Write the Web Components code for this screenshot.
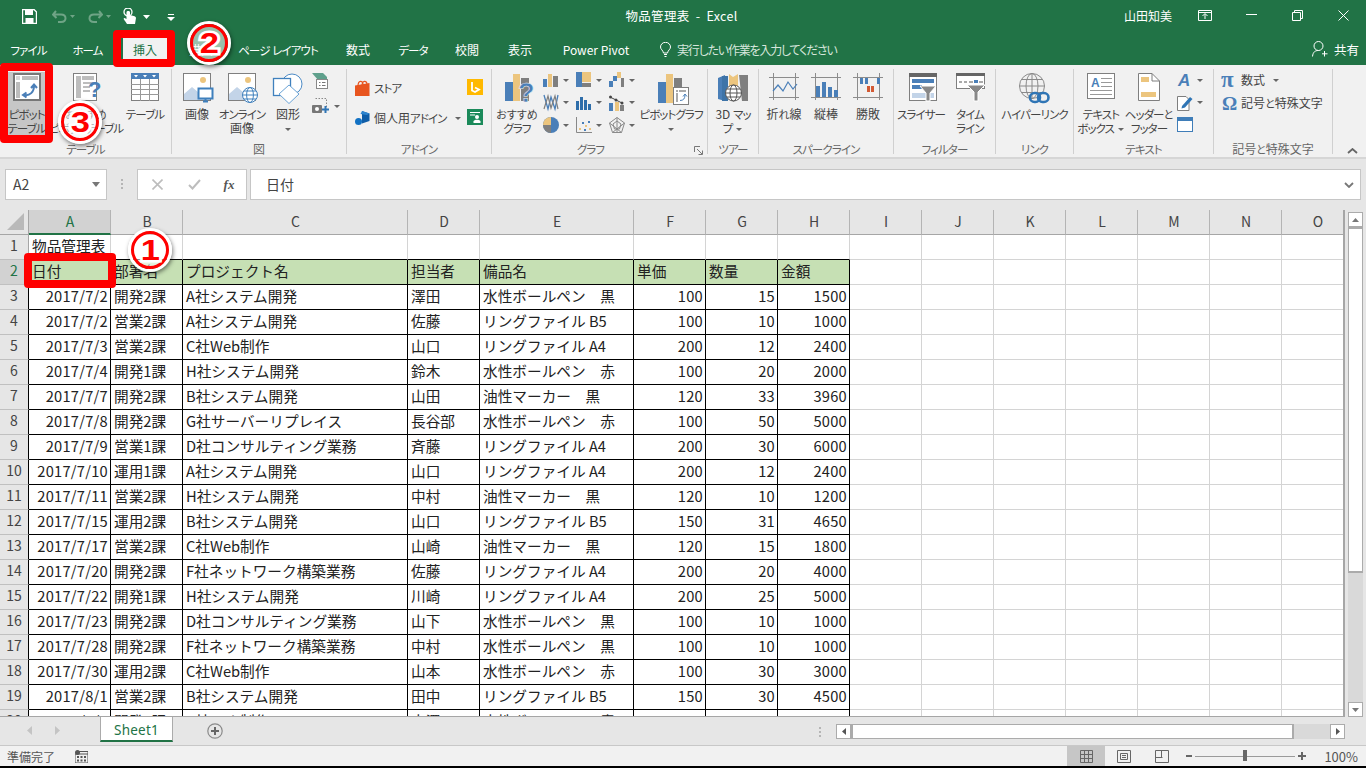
<!DOCTYPE html>
<html lang="ja">
<head>
<meta charset="utf-8">
<title>物品管理表 - Excel</title>
<style>
html, body { margin: 0; padding: 0; background: #000; overflow: hidden; }
body { font-family: "Noto Sans CJK JP", "Noto Sans", sans-serif; }
.k { font-size: 11.5px; letter-spacing: -.9px; }
.h { font-size: 11px; }
</style>
</head>
<body>
<xl-window>
  <xl-titlebar></xl-titlebar>
  <xl-tabs></xl-tabs>
  <xl-ribbon>
    <xl-group label="テーブル" w="172">
      <span style="width:7px"></span>
      <xl-big icon="pivot" w="39" active>ピボット<br>テーブル</xl-big>
      <xl-big icon="recpivot" w="80">おすすめ<br>ピボットテーブル</xl-big>
      <xl-big icon="table" w="38">テーブル</xl-big>
    </xl-group>
    <xl-group label="図" w="175">
      <xl-big icon="picture" w="50">画像</xl-big>
      <xl-big icon="online" w="40">オンライン<br>画像</xl-big>
      <xl-big icon="shapes" w="52">図形<br><xl-caret></xl-caret></xl-big>
      <xl-stack style="margin-left:-2px">
        <xl-small icon="model"></xl-small>
        <xl-small icon="shot" caret></xl-small>
      </xl-stack>
    </xl-group>
    <xl-group label="アドイン" w="145">
      <xl-stack gap="14" style="margin:7px 0 0 8px;width:112px">
        <xl-small icon="store" text="ストア"></xl-small>
        <xl-small icon="addin" text="個人用アドイン" caret></xl-small>
      </xl-stack>
      <xl-stack gap="14" style="margin-top:6px">
        <xl-small icon="bing"></xl-small>
        <xl-small icon="people"></xl-small>
      </xl-stack>
    </xl-group>
    <xl-group label="グラフ" w="216" launcher pad="18">
      <xl-big icon="recchart" w="50">おすすめ<br>グラフ</xl-big>
      <xl-stack cols="3" gap="6" style="margin-top:-1px;margin-left:1px">
        <xl-small icon="c1" caret></xl-small><xl-small icon="c2" caret></xl-small><xl-small icon="c3" caret></xl-small>
        <xl-small icon="c4" caret></xl-small><xl-small icon="c5" caret></xl-small><xl-small icon="c6" caret></xl-small>
        <xl-small icon="c7" caret></xl-small><xl-small icon="c8" caret></xl-small><xl-small icon="c9" caret></xl-small>
      </xl-stack>
      <xl-big icon="pivotchart" w="58">ピボットグラフ<br><xl-caret></xl-caret></xl-big>
    </xl-group>
    <xl-group label="ツアー" w="51">
      <xl-big icon="map3d" w="50">3D マッ<br>プ <xl-caret></xl-caret></xl-big>
    </xl-group>
    <xl-group label="スパークライン" w="135">
      <span style="width:4px"></span>
      <xl-big icon="spline" w="42">折れ線</xl-big>
      <xl-big icon="sbar" w="42">縦棒</xl-big>
      <xl-big icon="swin" w="42">勝敗</xl-big>
    </xl-group>
    <xl-group label="フィルター" w="102">
      <xl-big icon="slicer" w="54">スライサー</xl-big>
      <xl-big icon="timeline" w="44">タイム<br>ライン</xl-big>
    </xl-group>
    <xl-group label="リンク" w="78">
      <xl-big icon="link" w="77">ハイパーリンク</xl-big>
    </xl-group>
    <xl-group label="テキスト" w="140">
      <xl-big icon="textbox" w="54">テキスト<br>ボックス <xl-caret></xl-caret></xl-big>
      <xl-big icon="header" w="42">ヘッダーと<br>フッター</xl-big>
      <xl-stack gap="6" style="margin:-1px 0 0 7px">
        <xl-small icon="wordart" caret></xl-small>
        <xl-small icon="sign" caret></xl-small>
        <xl-small icon="object"></xl-small>
      </xl-stack>
    </xl-group>
    <xl-group label="記号と特殊文字" w="119">
      <xl-stack gap="7" style="margin:-1px 0 0 8px">
        <xl-small icon="pi" text="数式" caret></xl-small>
        <xl-small icon="omega" text="記号と特殊文字"></xl-small>
      </xl-stack>
    </xl-group>
  </xl-ribbon>
  <xl-formula-bar></xl-formula-bar>
  <xl-sheet></xl-sheet>
  <xl-sheet-tabs></xl-sheet-tabs>
  <xl-status></xl-status>
  <xl-callout x="113" y="30" w="62" h="37"></xl-callout>
  <xl-callout x="0" y="63" w="53" h="80"></xl-callout>
  <xl-callout x="24" y="253" w="92" h="35"></xl-callout>
  <xl-badge x="150" y="250" n="1"></xl-badge>
  <xl-badge x="209" y="43" n="2"></xl-badge>
  <xl-badge x="80" y="122" n="3"></xl-badge>
</xl-window>

<script>
const FONT = '"Noto Sans CJK JP", "Noto Sans", sans-serif';
const BLUE = '#4a7fb8';
const ORANGE = '#ecc57e';
const GRAY = '#7f7f7f';
const KANA_CSS = '.k{font-size:11.5px;letter-spacing:-.9px}.h{font-size:11px}';

// the ribbon font has narrow kana, so kana runs get their own span
function narrowKana(s) {
  return s.replace(/[ァ-ヶー・]+/g, m => `<span class="k">${m}</span>`)
    .replace(/[ぁ-ん]+/g, m => `<span class="h">${m}</span>`);
}

// icon table: [width, height, svg body]
const photo = `<rect x=".5" y=".5" width="27" height="27" fill="#fff" stroke="${GRAY}"/><circle cx="20" cy="7" r="3" fill="${ORANGE}"/><path d="M1 27V21L9 14 15 19 19 16 27 22V27Z" fill="#c3d4e8"/>`;
const sparkFrame = `<path d="M0 4.5H30M0 24.5H30M4.5 0V27M26.5 0V27" stroke="#8c8c8c" fill="none"/>`;
const ICONS = {
  pivot: [28, 28, `<rect x="1" y="1" width="26" height="26" fill="#fff" stroke="#777" stroke-width="2"/><rect x="9" y="3" width="16" height="4" fill="#bdbdbd"/><rect x="3" y="9" width="4" height="16" fill="#bdbdbd"/><rect x="3" y="3" width="4" height="4" fill="#d8d8d8"/><path d="M11 22C17 23 21 19 21 13M18 15L21 11.5 24 15M13.5 19.5L10 22 13.5 24.5" fill="none" stroke="${BLUE}" stroke-width="2"/>`],
  recpivot: [26, 32, `<rect x=".5" y=".5" width="23" height="27" fill="#fff" stroke="${GRAY}"/><rect x="3" y="3" width="5" height="22" fill="#bdbdbd"/><rect x="9" y="3" width="12" height="4" fill="#bdbdbd"/><path d="M10 10H21M10 14H17M10 18H17" stroke="#bdbdbd" stroke-width="2"/><text x="15" y="24" font-family="Liberation Sans" font-size="22" font-weight="700" fill="${BLUE}">?</text>`],
  table: [28, 28, `<rect x=".5" y=".5" width="27" height="27" fill="#fff" stroke="${GRAY}"/><rect width="28" height="6" fill="${BLUE}"/><path d="M3 2h4L5 4.5zM12 2h4L14 4.5zM21 2h4L23 4.5z" fill="#fff"/><path d="M0 11.5H28M0 16.5H28M0 21.5H28M9.5 6V28M18.5 6V28" stroke="#999"/>`],
  picture: [28, 31, `${photo}<rect x="15.5" y="15.5" width="14" height="10" fill="#fff" stroke="#3f80bd" stroke-width="2"/><path d="M20 28.5H25M22.5 26V29" stroke="#3f80bd" stroke-width="2"/>`],
  online: [28, 31, `${photo}<circle cx="22" cy="22" r="7.5" fill="#fff" stroke="#3f80bd"/><ellipse cx="22" cy="22" rx="3.4" ry="7.5" fill="none" stroke="#3f80bd"/><path d="M14.5 22H29.5M16 18H28M16 26H28" stroke="#3f80bd"/>`],
  shapes: [30, 31, `<circle cx="19" cy="11" r="10" fill="#fff" stroke="#4d8bc6"/><rect x=".5" y="5.5" width="17" height="17" fill="#fff" stroke="#3f80bd" stroke-width="1.3"/><path d="M16 12L26 21 16 30.5 6 21Z" fill="#fff" stroke="#6aa3d6"/>`],
  model: [16, 16, `<path d="M0 0H11L15 4V7H6Z" fill="#5fa08c"/><rect x="4.5" y="6.5" width="11" height="9" fill="#fff" stroke="#888"/><path d="M7 9.5H8.5M10 9.5H13.5M7 12.5H8.5M10 12.5H13.5" stroke="#777"/>`],
  shot: [18, 16, `<path d="M3.5 .5H14.5V9" fill="none" stroke="#888" stroke-dasharray="1.5 1.5"/><rect x="0" y="7" width="10" height="8" rx="1" fill="#777"/><circle cx="5" cy="11" r="2" fill="#fff"/><path d="M13.5 8V15M10 11.5H17" stroke="#2f75b5" stroke-width="2"/>`],
  store: [16, 15, `<path d="M0 4.5L14.5 2V15H0Z" fill="#e8551f"/><path d="M3 5C3 -1 8 -1 8 3.5M7 5C7 -1 12-1 12 3.5" fill="none" stroke="#e8551f" stroke-width="1.2"/>`],
  addin: [16, 15, `<path d="M7 0L14.5 2.5V10L7 12.5Z" fill="#105ea8"/><path d="M5.5 3L7 0 14.5 2.5 12 4Z" fill="#2f85cf"/><circle cx="3.5" cy="10.5" r="3.5" fill="#1272c4"/>`],
  bing: [16, 16, `<rect width="16" height="16" fill="#ffb900"/><path d="M5 3V11.5L8 13 12 10.5 8 8.5" fill="none" stroke="#fff" stroke-width="1.8"/>`],
  people: [16, 16, `<rect width="16" height="16" fill="#1b8a5a"/><path d="M3 3.5H13M3 6H8" stroke="#fff"/><circle cx="10" cy="8" r="2" fill="#fff"/><path d="M6.5 14V12.5C6.5 10 13.5 10 13.5 12.5V14Z" fill="#fff"/>`],
  recchart: [24, 32, `<rect y="9" width="8" height="19" fill="${BLUE}"/><rect x="8" y="1" width="7" height="27" fill="${ORANGE}"/><rect x="16" y="5" width="8" height="23" fill="${GRAY}"/><text x="13" y="29" font-family="Liberation Sans" font-size="27" font-weight="700" fill="${BLUE}" stroke="#f1f1f1" stroke-width=".5">?</text>`],
  c1: [16, 16, `<rect y="7" width="4" height="8" fill="${BLUE}"/><rect x="5" y="2" width="4" height="13" fill="${ORANGE}"/><rect x="10" y="4" width="5" height="11" fill="${GRAY}"/>`],
  c2: [16, 16, `<rect width="6" height="15" fill="${BLUE}"/><rect x="6" width="9" height="10" fill="${ORANGE}"/><rect x="6" y="11" width="9" height="4" fill="${GRAY}"/>`],
  c3: [16, 16, `<rect y="9" width="4" height="6" fill="${BLUE}"/><rect x="4" y="4" width="4" height="5" fill="${BLUE}"/><rect x="8" y="0" width="4" height="6" fill="${ORANGE}"/><rect x="12" y="6" width="3" height="9" fill="${GRAY}"/>`],
  c4: [16, 17, `<path d="M1 1L5 15 8 3 12 15 15 1" fill="none" stroke="${BLUE}" stroke-width="1.3"/><path d="M1 15L5 2 8 14 12 2 15 15" fill="none" stroke="${GRAY}" stroke-width="1.2"/>`],
  c5: [16, 16, `<rect y="6" width="3" height="9" fill="#2f6eaa"/><rect x="4" y="2" width="3" height="13" fill="#2f6eaa"/><rect x="8" y="5" width="3" height="10" fill="#2f6eaa"/><rect x="12" y="9" width="3" height="6" fill="#2f6eaa"/>`],
  c6: [16, 16, `<rect y="8" width="4" height="8" fill="${BLUE}"/><rect x="6" y="7" width="4" height="9" fill="${ORANGE}"/><rect x="11" y="10" width="4" height="6" fill="${GRAY}"/><path d="M1 2L7 5 13 8" stroke="#444" fill="none"/><circle cx="1.5" cy="2" r="1.5" fill="#444"/><circle cx="7" cy="5" r="1.5" fill="#444"/><circle cx="13" cy="8" r="1.5" fill="#444"/>`],
  c7: [16, 16, `<circle cx="8" cy="8" r="8" fill="${BLUE}"/><path d="M8 8H0A8 8 0 0 1 8 0Z" fill="${ORANGE}"/><path d="M8 8V16A8 8 0 0 1 0 8Z" fill="${GRAY}"/>`],
  c8: [16, 16, `<path d="M.5 0V15.5H16" fill="none" stroke="#888"/><path d="M3 11h2v2H3zM9 8h2v2H9zM13 11h2v2h-2z" fill="${ORANGE}"/><path d="M6 5h2v2H6zM12 4h2v2h-2zM8 12h2v2H8z" fill="${BLUE}"/>`],
  c9: [16, 16, `<path d="M8 .5L15.5 6 12.5 15.5H3.5L.5 6ZM8 4L12 7 10.5 12H5.5L4 7ZM8 .5V15M.5 6L12.5 15.5M15.5 6L3.5 15.5" fill="none" stroke="#8a8a8a"/>`],
  pivotchart: [26, 32, `<rect y="9" width="8" height="21" fill="${BLUE}"/><rect x="8" y="1" width="7" height="29" fill="${ORANGE}"/><rect x="16" y="5" width="8" height="25" fill="${GRAY}"/><rect x="15.5" y="14.5" width="15" height="17" fill="#fff" stroke="${GRAY}"/><rect x="18" y="17" width="2" height="2" fill="#aaa"/><rect x="21" y="17" width="7" height="2" fill="#aaa"/><rect x="18" y="20" width="2" height="9" fill="#aaa"/><path d="M22 27.5C25.5 27.5 27 25.5 27 22M25 23.5L27 21 29 23.5" fill="none" stroke="${BLUE}"/>`],
  map3d: [31, 29, `<path d="M0 5L7 2V28L0 26Z" fill="${BLUE}"/><path d="M4 3H10V28H4Z" fill="#3e74a8"/><path d="M11 1L15 4 20 1V14H11Z" fill="${ORANGE}"/><path d="M21 2H30V28L24 28Z" fill="${GRAY}"/><circle cx="15.5" cy="20" r="8" fill="#fff" stroke="#555"/><ellipse cx="15.5" cy="20" rx="3.5" ry="8" fill="none" stroke="#555"/><path d="M7.5 20H23.5M9 16H22M9 24H22" stroke="#555"/>`],
  spline: [30, 27, `${sparkFrame}<path d="M4 18L9 12 14 18 19 9 24 16 28 11" fill="none" stroke="${BLUE}" stroke-width="1.2"/>`],
  sbar: [30, 27, `${sparkFrame}<rect x="5" y="13" width="4" height="11" fill="${BLUE}"/><rect x="11" y="9" width="4" height="15" fill="${BLUE}"/><rect x="17" y="14" width="4" height="10" fill="${BLUE}"/><rect x="23" y="17" width="4" height="7" fill="${BLUE}"/>`],
  swin: [30, 27, `${sparkFrame}<rect x="7" y="5" width="3" height="6" fill="${BLUE}"/><rect x="12" y="5" width="3" height="6" fill="${BLUE}"/><rect x="14" y="13" width="3" height="6" fill="#d35a34"/><rect x="18" y="13" width="3" height="6" fill="#d35a34"/><rect x="24" y="5" width="3" height="6" fill="${BLUE}"/>`],
  slicer: [24, 28, `<rect x=".5" y=".5" width="27" height="27" fill="#fff" stroke="${GRAY}"/><rect width="28" height="4" fill="#666"/><rect x="3" y="6" width="22" height="4" fill="${BLUE}"/><rect x="3" y="12" width="10" height="4" fill="${BLUE}"/><rect x="3" y="20" width="22" height="5" fill="#c3d4e8"/><path d="M11 13H27L21 20V28H17V20Z" fill="#888" stroke="#fff"/>`],
  timeline: [29, 28, `<rect x=".5" y=".5" width="28" height="15" fill="#fff" stroke="${GRAY}"/><rect width="29" height="3" fill="#666"/><path d="M3 8h3v2H3zM8 8h3v2H8zM13 8h4v2h-4zM23 8h4v2h-4z" fill="#aaa"/><rect x="18" y="7" width="4" height="3" fill="${BLUE}"/><path d="M11 12H29L22 19V28H18V19Z" fill="#888" stroke="#fff"/>`],
  link: [31, 31, `<circle cx="13" cy="13" r="12.5" fill="none" stroke="#8a8a8a"/><ellipse cx="13" cy="13" rx="6" ry="12.5" fill="none" stroke="#8a8a8a"/><path d="M.5 13H25.5M2.5 6.5H23.5M2.5 19.5H23.5M13 .5V25.5" stroke="#8a8a8a"/><rect x="11" y="20" width="10" height="9" rx="4.5" fill="none" stroke="#2f75b5" stroke-width="2.6"/><rect x="19" y="20" width="10.5" height="9" rx="4.5" fill="none" stroke="#2f75b5" stroke-width="2.6"/>`],
  textbox: [28, 27, `<rect x=".5" y=".5" width="27" height="25" fill="#fff" stroke="${GRAY}"/><text x="4" y="13.5" font-family="Liberation Sans" font-size="12" font-weight="700" fill="${BLUE}">A</text><path d="M14 5.5H25M14 9.5H25M14 13.5H25M3 17.5H25M3 21.5H25" stroke="#999"/>`],
  header: [22, 28, `<path d="M.5 .5H14L21.5 8V27.5H.5Z" fill="#fff" stroke="${GRAY}"/><path d="M14 .5V8H21.5" fill="none" stroke="${GRAY}"/><rect x="3" y="4" width="8" height="5" fill="${ORANGE}"/><rect x="3" y="19" width="15" height="5" fill="${ORANGE}"/>`],
  wordart: [16, 16, `<text x="1" y="14" font-family="Liberation Sans" font-size="17" font-style="italic" font-weight="700" fill="${BLUE}">A</text>`],
  sign: [16, 17, `<path d="M.5 2.5H9L12 5.5V16.5H.5Z" fill="#fff" stroke="${GRAY}"/><path d="M5 12L13 3 15.5 5 8 13.5 4.5 14.5Z" fill="#2f75b5"/>`],
  object: [16, 15, `<rect x=".5" y=".5" width="15" height="14" fill="#fff" stroke="#3f7db8"/><rect width="16" height="4" fill="#3f7db8"/>`],
  pi: [16, 15, `<text x="-1" y="14" font-family="Liberation Serif" font-size="23" font-weight="700" fill="${BLUE}">π</text>`],
  omega: [16, 15, `<text x="0" y="14" font-family="Liberation Serif" font-size="19" font-weight="700" fill="${BLUE}">Ω</text>`],
};

class XlIcon extends HTMLElement {
  connectedCallback() {
    const [w, h, body] = ICONS[this.getAttribute('name')];
    this.attachShadow({mode: 'open'}).innerHTML = `
      <style>:host{display:block;width:${w}px;height:${h}px;flex:none} svg{display:block;overflow:visible}</style>
      <svg width="${w}" height="${h}" viewBox="0 0 ${w} ${h}">${body}</svg>`;
  }
}
customElements.define('xl-icon', XlIcon);

class XlCaret extends HTMLElement {
  constructor() {
    super();
    this.attachShadow({mode: 'open'}).innerHTML = `
      <style>:host{display:inline-block;width:0;height:0;border:3px solid transparent;border-top:3px solid #666;border-bottom:0;vertical-align:middle;margin:0 1px}</style>`;
  }
}
customElements.define('xl-caret', XlCaret);

class XlWindow extends HTMLElement {
  constructor() {
    super();
    this.attachShadow({mode: 'open'}).innerHTML = `
      <style>
        :host{display:flex;flex-direction:column;position:relative;width:1366px;height:768px;overflow:hidden;background:#000;font-family:${FONT}}
      </style><slot></slot>`;
  }
}
customElements.define('xl-window', XlWindow);

class XlTitlebar extends HTMLElement {
  constructor() {
    super();
    const w = '#fff', dim = '#6fa486';
    this.attachShadow({mode: 'open'}).innerHTML = `
      <style>
        :host{display:grid;grid-template-columns:1fr auto 1fr;align-items:center;height:35px;background:#217346;color:#fff;font-size:12.5px;flex:none}
        .qat{display:flex;align-items:center;padding-left:22px;margin-top:-2px}
        .right{display:flex;align-items:center;justify-content:flex-end;margin-top:-5px}
        .user{font-size:12px;margin-right:10px}
        .title{letter-spacing:.3px;white-space:pre;margin-top:-5px;margin-left:-3px}
        svg{display:block;flex:none}
        .btn{width:46px;display:flex;justify-content:center}
      </style>
      <div class="qat">
        <svg width="15" height="15" viewBox="0 0 15 15" style="margin-right:15px"><path d="M.5 .5H12L14.5 3V14.5H.5Z" fill="none" stroke="${w}" stroke-width="1.4"/><rect x="3" y="1" width="8" height="5" fill="${w}"/><rect x="3.5" y="9" width="8" height="5" fill="${w}"/></svg>
        <svg width="15" height="13" viewBox="0 0 15 13" style="margin-right:2px"><path d="M4 1L1 4.5 4.5 8M1 4.5H9C15 4.5 15 12 9 12H6" fill="none" stroke="${dim}" stroke-width="2"/></svg>
        <svg width="7" height="4" style="margin-right:12px"><path d="M1 0h5L3.5 3z" fill="${dim}"/></svg>
        <svg width="15" height="13" viewBox="0 0 15 13" style="margin-right:2px"><path d="M11 1L14 4.5 10.5 8M14 4.5H6C0 4.5 0 12 6 12H9" fill="none" stroke="${dim}" stroke-width="2"/></svg>
        <svg width="7" height="4" style="margin-right:11px"><path d="M1 0h5L3.5 3z" fill="${dim}"/></svg>
        <svg width="14" height="17" viewBox="0 0 14 17" style="margin-right:6px"><circle cx="5" cy="4" r="4" fill="none" stroke="${w}" stroke-width="1.3"/><path d="M3.5 4V11L1.5 10C0 10 1 12 2 13L4 16H12L13 10C13 8 9 7.5 7 7V4C7 2.5 3.5 2.5 3.5 4Z" fill="${w}"/></svg>
        <svg width="7" height="4" style="margin-right:17px"><path d="M0 0h7L3.5 4z" fill="${w}"/></svg>
        <svg width="8" height="8"><path d="M1 1.5H7" stroke="${w}"/><path d="M0 4h8L4 8z" fill="${w}"/></svg>
      </div>
      <div class="title">物品管理表  -  Excel</div>
      <div class="right">
        <span class="user">山田知美</span>
        <span class="btn"><svg width="14" height="11" viewBox="0 0 14 11"><path d="M.5 .5H13.5V10.5H.5ZM.5 2.5H13.5M7 9V4M4.5 6L7 3.5 9.5 6" fill="none" stroke="${w}"/></svg></span>
        <span class="btn"><svg width="11" height="2"><rect y="0" width="11" height="1" fill="${w}"/></svg></span>
        <span class="btn"><svg width="11" height="11" viewBox="0 0 11 11"><path d="M.5 2.5H8.5V10.5H.5ZM2.5 2.5V.5H10.5V8.5H8.5" fill="none" stroke="${w}"/></svg></span>
        <span class="btn"><svg width="11" height="11" viewBox="0 0 11 11"><path d="M.5 .5L10.5 10.5M10.5 .5L.5 10.5" stroke="${w}"/></svg></span>
      </div>`;
  }
}
customElements.define('xl-titlebar', XlTitlebar);

class XlTabs extends HTMLElement {
  constructor() {
    super();
    const tabs = [['ファイル', 57], ['ホーム', 61], ['挿入', 54], ['描画', 58], ['ページ レイアウト', 96], ['数式', 64], ['データ', 46], ['校閲', 62], ['表示', 44], ['Power Pivot', 108]];
    this.attachShadow({mode: 'open'}).innerHTML = `
      <style>
        :host{display:flex;align-items:stretch;height:30px;background:#217346;color:#fff;font-size:12px;font-feature-settings:"palt";flex:none}
        .tab{display:flex;align-items:center;justify-content:center;white-space:pre;padding-bottom:2px;box-sizing:border-box}
        .tab.on{background:#f1f1f1;color:#217346;margin:3px 5px 0;padding-bottom:5px}
        .tell{display:flex;align-items:center;gap:6px;margin-left:10px;color:#d6e6dc;padding-bottom:2px}
        .tell span{letter-spacing:-1.2px}
        .share{display:flex;align-items:center;gap:6px;margin-left:auto;padding:0 7px 2px 0}
        svg{display:block}
        ${KANA_CSS}
      </style>
      ${tabs.map(([t, w], i) => `<div class="tab${i == 2 ? ' on' : ''}" style="width:${i == 2 ? w - 10 : w}px"><span>${narrowKana(t)}</span></div>`).join('')}
      <div class="tell">
        <svg width="11" height="15" viewBox="0 0 11 15"><path d="M3.5 11C3 8 .5 7.5 .5 5A5 4.7 0 0 1 10.5 5C10.5 7.5 8 8 7.5 11ZM4 12.5H7M4.5 14.5H6.5" fill="none" stroke="#fff"/></svg>
        <span>実行したい作業を入力してください</span>
      </div>
      <div class="share">
        <svg width="16" height="16" viewBox="0 0 16 16"><circle cx="6.5" cy="5" r="4.5" fill="none" stroke="#fff"/><path d="M.5 15.5C1 11 3 9.5 6.5 9.5M12.5 10V15.5M10 12.8H15.5" fill="none" stroke="#fff"/></svg>
        <span style="font-size:12.5px">共有</span>
      </div>`;
  }
}
customElements.define('xl-tabs', XlTabs);

class XlRibbon extends HTMLElement {
  constructor() {
    super();
    this.attachShadow({mode: 'open'}).innerHTML = `
      <style>
        :host{display:flex;position:relative;height:94px;box-sizing:border-box;background:#f1f1f1;border-bottom:2px solid #d6d6d6;flex:none}
        .collapse{position:absolute;left:1347px;top:83px}
      </style>
      <slot></slot>
      <svg class="collapse" width="11" height="6" viewBox="0 0 11 6"><path d="M1 5L5.5 1 10 5" fill="none" stroke="#666" stroke-width="1.8"/></svg>`;
  }
}
customElements.define('xl-ribbon', XlRibbon);

class XlGroup extends HTMLElement {
  connectedCallback() {
    const pad = this.getAttribute('pad') || 0;
    this.attachShadow({mode: 'open'}).innerHTML = `
      <style>
        :host{display:flex;flex-direction:column;position:relative;box-sizing:border-box;width:${this.getAttribute('w')}px;height:85px;margin-top:4px;border-right:1px solid #d0d0d0;flex:none}
        .content{display:flex;align-items:flex-start;flex:1;padding-top:4px;min-height:0}
        .label{height:13px;padding-top:6px;line-height:16px;text-align:center;font-size:12px;color:#666;font-feature-settings:"palt";padding-right:${pad}px;white-space:nowrap}
        svg{position:absolute;right:4px;bottom:-1px}
        ${KANA_CSS}
      </style>
      <div class="content"><slot></slot></div>
      <div class="label">${narrowKana(this.getAttribute('label'))}</div>
      ${this.hasAttribute('launcher') ? `<svg width="9" height="9" viewBox="0 0 9 9"><path d="M.5 6V.5H6M3 3L8 8M4.5 8.5H8.5V4.5" fill="none" stroke="#777"/></svg>` : ''}`;
  }
}
customElements.define('xl-group', XlGroup);

class XlBig extends HTMLElement {
  connectedCallback() {
    const name = this.getAttribute('icon');
    const active = this.hasAttribute('active');
    this.innerHTML = narrowKana(this.innerHTML);
    this.attachShadow({mode: 'open'}).innerHTML = `
      <style>
        :host{display:flex;flex-direction:column;align-items:center;width:${this.getAttribute('w')}px;flex:none;font-size:12px;line-height:14px;color:#444;font-feature-settings:"palt";white-space:nowrap;text-align:center;${active ? 'background:#c6c6c6;height:63px;margin-top:-1px;padding-top:1px;box-sizing:border-box;' : ''}}
        .ic{height:34px;flex:none}
        .tx{display:block}
      </style>
      <div class="ic"><xl-icon name="${name}"></xl-icon></div>
      <div class="tx"><slot></slot></div>`;
  }
}
customElements.define('xl-big', XlBig);

class XlStack extends HTMLElement {
  connectedCallback() {
    const cols = this.getAttribute('cols') || 1;
    const gap = this.getAttribute('gap') || 9;
    this.attachShadow({mode: 'open'}).innerHTML = `
      <style>:host{display:grid;grid-template-columns:repeat(${cols},auto);row-gap:${gap}px;align-content:start;flex:none}</style>
      <slot></slot>`;
  }
}
customElements.define('xl-stack', XlStack);

class XlSmall extends HTMLElement {
  connectedCallback() {
    const text = this.getAttribute('text');
    const caret = this.hasAttribute('caret');
    const isChart = /^c\d$/.test(this.getAttribute('icon'));
    this.attachShadow({mode: 'open'}).innerHTML = `
      <style>
        :host{display:flex;align-items:center;font-size:12px;color:#444;font-feature-settings:"palt";white-space:nowrap;${isChart ? 'width:33px;' : ''}}
        .tx{margin-left:3px;line-height:16px}
        xl-caret{margin-left:${text ? 8 : 4}px}
        ${KANA_CSS}
      </style>
      <xl-icon name="${this.getAttribute('icon')}"></xl-icon>
      ${text ? `<span class="tx">${narrowKana(text)}</span>` : ''}
      ${caret ? '<xl-caret></xl-caret>' : ''}`;
  }
}
customElements.define('xl-small', XlSmall);

class XlFormulaBar extends HTMLElement {
  constructor() {
    super();
    this.attachShadow({mode: 'open'}).innerHTML = `
      <style>
        :host{display:flex;align-items:flex-start;height:51px;box-sizing:border-box;padding:10px 5px 0;background:#e6e6e6;flex:none;color:#444}
        .box{background:#fff;border:1px solid #c6c6c6;height:31px;box-sizing:border-box;display:flex;align-items:center}
        .box span.t{padding-bottom:2px}
        .name{width:102px;padding:0 6px 0 7px;justify-content:space-between;font-size:14px}
        .dots{width:30px;display:flex;justify-content:center;padding-top:10px}
        .btns{width:110px;font-family:"Liberation Serif",serif}
        .btns span{display:flex;justify-content:center}
        .input{flex:1;margin-left:3px;padding:0 6px 0 15px;justify-content:space-between;font-size:14px}
        svg{display:block}
      </style>
      <div class="box name"><span class="t">A2</span><svg width="8" height="5"><path d="M0 0h8L4 5z" fill="#777"/></svg></div>
      <div class="dots"><svg width="2" height="10"><path d="M0 0h2v2H0zM0 4h2v2H0zM0 8h2v2H0z" fill="#b5b5b5"/></svg></div>
      <div class="box btns">
        <span style="width:38px;margin-left:0"><svg width="11" height="11" viewBox="0 0 11 11"><path d="M.5 .5L10.5 10.5M10.5 .5L.5 10.5" stroke="#bdbdbd" stroke-width="1.6"/></svg></span>
        <span style="width:36px"><svg width="13" height="11" viewBox="0 0 13 11"><path d="M1 6L4.5 9.5 12 1" fill="none" stroke="#bdbdbd" stroke-width="2"/></svg></span>
        <span style="width:34px;font-style:italic;font-weight:700;font-size:13px;color:#555">fx</span>
      </div>
      <div class="box input"><span class="t">日付</span><svg width="10" height="6" viewBox="0 0 10 6"><path d="M1 1L5 5 9 1" fill="none" stroke="#777" stroke-width="1.8"/></svg></div>`;
  }
}
customElements.define('xl-formula-bar', XlFormulaBar);

const ROWS = [
  ['物品管理表'],
  ['日付', '部署名', 'プロジェクト名', '担当者', '備品名', '単価', '数量', '金額'],
  ['2017/7/2', '開発2課', 'A社システム開発', '澤田', '水性ボールペン　黒', 100, 15, 1500],
  ['2017/7/2', '営業2課', 'A社システム開発', '佐藤', 'リングファイル B5', 100, 10, 1000],
  ['2017/7/3', '営業2課', 'C社Web制作', '山口', 'リングファイル A4', 200, 12, 2400],
  ['2017/7/4', '開発1課', 'H社システム開発', '鈴木', '水性ボールペン　赤', 100, 20, 2000],
  ['2017/7/7', '開発2課', 'B社システム開発', '山田', '油性マーカー　黒', 120, 33, 3960],
  ['2017/7/8', '開発2課', 'G社サーバーリプレイス', '長谷部', '水性ボールペン　赤', 100, 50, 5000],
  ['2017/7/9', '営業1課', 'D社コンサルティング業務', '斉藤', 'リングファイル A4', 200, 30, 6000],
  ['2017/7/10', '運用1課', 'A社システム開発', '山口', 'リングファイル A4', 200, 12, 2400],
  ['2017/7/11', '営業2課', 'H社システム開発', '中村', '油性マーカー　黒', 120, 10, 1200],
  ['2017/7/15', '運用2課', 'B社システム開発', '山口', 'リングファイル B5', 150, 31, 4650],
  ['2017/7/17', '営業2課', 'C社Web制作', '山崎', '油性マーカー　黒', 120, 15, 1800],
  ['2017/7/20', '開発2課', 'F社ネットワーク構築業務', '佐藤', 'リングファイル A4', 200, 20, 4000],
  ['2017/7/22', '開発1課', 'H社システム開発', '川崎', 'リングファイル A4', 200, 25, 5000],
  ['2017/7/23', '開発2課', 'D社コンサルティング業務', '山下', '水性ボールペン　黒', 100, 10, 1000],
  ['2017/7/28', '開発2課', 'F社ネットワーク構築業務', '中村', '水性ボールペン　黒', 100, 10, 1000],
  ['2017/7/30', '運用2課', 'C社Web制作', '山本', '水性ボールペン　赤', 100, 30, 3000],
  ['2017/8/1', '営業2課', 'B社システム開発', '田中', 'リングファイル B5', 150, 30, 4500],
  ['2017/8/4', '開発1課', 'C社Web制作', '大澤', '水性ボールペン　青', 100, 10, 1000],
];

class XlSheet extends HTMLElement {
  constructor() {
    super();
    const letters = 'ABCDEFGHIJKLMNO'.split('');
    let html = '<div class="cell corner"><i></i></div>';
    letters.forEach((l, i) => {
      html += `<div class="cell colh${i == 0 ? ' sel' : ''}">${l}</div>`;
    });
    ROWS.forEach((row, r) => {
      const n = r + 1;
      html += `<div class="cell rowh${n == 2 ? ' sel' : ''}${n >= 2 ? ' dark' : ''}">${n}</div>`;
      letters.forEach((l, c) => {
        const v = row[c] === undefined ? '' : row[c];
        const cls = ['cell'];
        if (n >= 2 && c < 8) cls.push('tb');
        if (n == 1 && c < 8) cls.push('tb-top');
        if (n == 2 && c < 8) cls.push('head');
        if (n >= 3 && (c == 0 || c >= 5) && c < 8) cls.push('num');
        if (n == 1 && c == 0) cls.push('over');
        html += `<div class="${cls.join(' ')}">${v}</div>`;
      });
    });
    this.attachShadow({mode: 'open'}).innerHTML = `
      <style>
        :host{display:flex;height:507px;background:#e6e6e6;flex:none}
        .view{width:1345px;height:507px;overflow:hidden;box-sizing:border-box;border-right:2px solid #a6a6a6;border-bottom:1px solid #a6a6a6;background:#fff}
        .grid{display:grid;grid-template-columns:29px 82px 72px 225px 72px 154px repeat(10,72px);grid-auto-rows:25px;width:max-content;font-size:14.67px;color:#222;background:#fff}
        .cell{box-sizing:border-box;border-right:1px solid #d4d4d4;border-bottom:1px solid #d4d4d4;line-height:21px;padding:0 2px 0 3px;white-space:nowrap;min-width:0}
        .corner{background:#e6e6e6;position:relative;border-right:1px solid #a6a6a6;border-bottom:1px solid #a6a6a6}
        .corner i{position:absolute;right:4px;bottom:4px;border-style:solid;border-width:0 0 17px 17px;border-color:transparent transparent #b9b9b9 transparent}
        .colh{background:#e6e6e6;color:#444;text-align:center;font-size:14px;line-height:23px;border-right:1px solid #b4b4b4;border-bottom:1px solid #a6a6a6}
        .rowh{background:#e6e6e6;color:#444;text-align:center;font-size:14px;border-right:1px solid #a6a6a6;border-bottom:1px solid #c0c0c0;padding:0}
        .rowh.dark{border-right-color:#000}
        .sel{background:#d2d2d2;color:#217346}
        .colh.sel{border-bottom:2px solid #217346}
        .tb{border-right-color:#000;border-bottom-color:#000}
        .tb-top{border-bottom-color:#000}
        .head{background:#c6e0b4}
        .num{text-align:right;letter-spacing:.25px}
        .over{overflow:visible;position:relative;z-index:1}
        .vbar{width:21px;box-sizing:border-box;padding:2px 3px 0 3px;display:flex;flex-direction:column}
        .btn{background:#fff;border:1px solid #ababab;width:15px;height:15px;box-sizing:border-box;display:flex;align-items:center;justify-content:center;flex:none}
        .thumb{background:#fff;border:1px solid #ababab;border-width:2px 1px;box-sizing:border-box;width:15px;height:346px;flex:none}
        .track{flex:1;background:#d9d9d9;width:15px}
        svg{display:block}
      </style>
      <div class="view"><div class="grid">${html}</div></div>
      <div class="vbar">
        <div class="btn"><svg width="7" height="4"><path d="M3.5 0L7 4H0z" fill="#777"/></svg></div>
        <div class="thumb"></div>
        <div class="track"></div>
        <div class="btn"><svg width="7" height="4"><path d="M0 0H7L3.5 4z" fill="#777"/></svg></div>
      </div>`;
  }
}
customElements.define('xl-sheet', XlSheet);

class XlSheetTabs extends HTMLElement {
  constructor() {
    super();
    this.attachShadow({mode: 'open'}).innerHTML = `
      <style>
        :host{display:flex;align-items:flex-start;height:29px;box-sizing:border-box;background:#e6e6e6;border-bottom:1px solid #c8c8c8;flex:none;position:relative}
        .nav{display:flex;width:100px;padding:9px 0 0 27px;box-sizing:border-box;gap:23px}
        .tab{width:73px;height:25px;box-sizing:border-box;background:#fff;border:1px solid #ababab;border-top:0;border-bottom:2px solid #217346;color:#217346;font-size:13.5px;line-height:26px;text-align:center;letter-spacing:.2px;font-family:"Noto Sans",sans-serif}
        .add{margin:6px 0 0 34px}
        .dots{margin:10px 0 0 0;position:absolute;left:819px}
        .hbar{position:absolute;left:836px;top:7px;width:509px;height:15px;display:flex}
        .btn{width:15px;height:15px;background:#fff;border:1px solid #ababab;box-sizing:border-box;display:flex;align-items:center;justify-content:center}
        .thumb{width:443px;height:15px;background:#fff;border:1px solid #ababab;border-width:1px 2px;box-sizing:border-box}
        .track{flex:1;background:#d9d9d9}
        svg{display:block}
      </style>
      <div class="nav">
        <svg width="5" height="9"><path d="M5 0V9L0 4.5z" fill="#c4c4c4"/></svg>
        <svg width="5" height="9"><path d="M0 0V9L5 4.5z" fill="#c4c4c4"/></svg>
      </div>
      <div class="tab">Sheet1</div>
      <svg class="add" width="16" height="16" viewBox="0 0 16 16"><circle cx="8" cy="8" r="7.2" fill="none" stroke="#8a8a8a" stroke-width="1.2"/><path d="M8 4V12M4 8H12" stroke="#666" stroke-width="2"/></svg>
      <svg class="dots" width="2" height="10"><path d="M0 0h2v2H0zM0 4h2v2H0zM0 8h2v2H0z" fill="#b5b5b5"/></svg>
      <div class="hbar">
        <div class="btn"><svg width="4" height="7"><path d="M4 0V7L0 3.5z" fill="#555"/></svg></div>
        <div class="thumb"></div>
        <div class="track"></div>
        <div class="btn"><svg width="4" height="7"><path d="M0 0V7L4 3.5z" fill="#555"/></svg></div>
      </div>`;
  }
}
customElements.define('xl-sheet-tabs', XlSheetTabs);

class XlStatus extends HTMLElement {
  constructor() {
    super();
    this.attachShadow({mode: 'open'}).innerHTML = `
      <style>
        :host{display:flex;align-items:center;height:20px;background:#f1f1f1;color:#555;font-size:12px;font-feature-settings:"palt";flex:none}
        .left{padding-left:7px;width:75px;box-sizing:border-box}
        .right{margin-left:auto;display:flex;align-items:center;height:20px}
        .view{width:38px;height:20px;display:flex;align-items:center;justify-content:center}
        .view.on{background:#c6c6c6}
        .slider{width:100px;height:20px;margin:0 3px;position:relative;display:flex;align-items:center}
        .slider hr{width:100%;height:1px;border:0;margin:0;background:#9a9a9a}
        .slider b{position:absolute;left:48px;top:4px;width:4px;height:11px;background:#666}
        .pct{width:60px;text-align:right;padding-right:8px;box-sizing:border-box;font-size:13px}
        svg{display:block}
      </style>
      <div class="left">準備完了</div>
      <svg width="13" height="13" viewBox="0 0 13 13"><circle cx="2.5" cy="2.5" r="2.5" fill="#555"/><path d="M3 1.5H13V13H0V4H13" fill="none" stroke="#555"/><path d="M2 6h2v2H2zM5.5 6h2v2h-2zM9 6h2v2H9zM2 9.5h2v2H2zM5.5 9.5h2v2h-2zM9 9.5h2v2H9z" fill="#555"/></svg>
      <div class="right">
        <div class="view on"><svg width="13" height="13" viewBox="0 0 13 13"><path d="M.5 .5H12.5V12.5H.5ZM.5 4.5H12.5M.5 8.5H12.5M4.5 .5V12.5M8.5 .5V12.5" fill="none" stroke="#666"/></svg></div>
        <div class="view"><svg width="14" height="13" viewBox="0 0 14 13"><path d="M.5 .5H13.5V12.5H.5Z" fill="none" stroke="#666"/><path d="M3.5 3.5H10.5V9.5H3.5ZM5 5.5H9M5 7.5H9" fill="none" stroke="#666"/></svg></div>
        <div class="view"><svg width="14" height="13" viewBox="0 0 14 13"><path d="M.5 .5H13.5V12.5H.5ZM.5 7.5H7.5M6.5 .5V7.5" fill="none" stroke="#666"/></svg></div>
        <svg width="6" height="2" style="margin-left:5px"><rect width="6" height="2" fill="#666"/></svg>
        <div class="slider"><hr><b></b></div>
        <svg width="8" height="8" viewBox="0 0 8 8"><path d="M0 4H8M4 0V8" stroke="#666" stroke-width="2"/></svg>
        <div class="pct">100%</div>
      </div>`;
  }
}
customElements.define('xl-status', XlStatus);

// overlays drawn on top of the screenshot
class XlCallout extends HTMLElement {
  connectedCallback() {
    const a = n => this.getAttribute(n);
    this.attachShadow({mode: 'open'}).innerHTML = `
      <style>:host{position:absolute;left:${a('x')}px;top:${a('y')}px;width:${a('w')}px;height:${a('h')}px;box-sizing:border-box;border:8px solid #f00;border-radius:4px;z-index:5}</style>`;
  }
}
customElements.define('xl-callout', XlCallout);

class XlBadge extends HTMLElement {
  connectedCallback() {
    const a = n => this.getAttribute(n);
    this.attachShadow({mode: 'open'}).innerHTML = `
      <style>
        :host{position:absolute;left:${a('x') - 22}px;top:${a('y') - 22}px;width:44px;height:44px;box-sizing:border-box;border-radius:50%;border:3px solid #fff;box-shadow:1px 2px 4px rgba(0,0,0,.5);z-index:6;
          display:flex;align-items:center;justify-content:center}
        .in{width:38px;height:38px;box-sizing:border-box;border:3px solid #f00;border-radius:50%;background:rgba(255,255,255,.55);display:flex;align-items:center;justify-content:center;
          font:700 30px/1 "Liberation Sans",sans-serif;color:#f00;-webkit-text-stroke:5px #fff;paint-order:stroke fill}
        .in span{display:inline-block;transform:scaleX(1.15)}
      </style>
      <div class="in"><span>${a('n')}</span></div>`;
  }
}
customElements.define('xl-badge', XlBadge);
</script>
</body>
</html>
